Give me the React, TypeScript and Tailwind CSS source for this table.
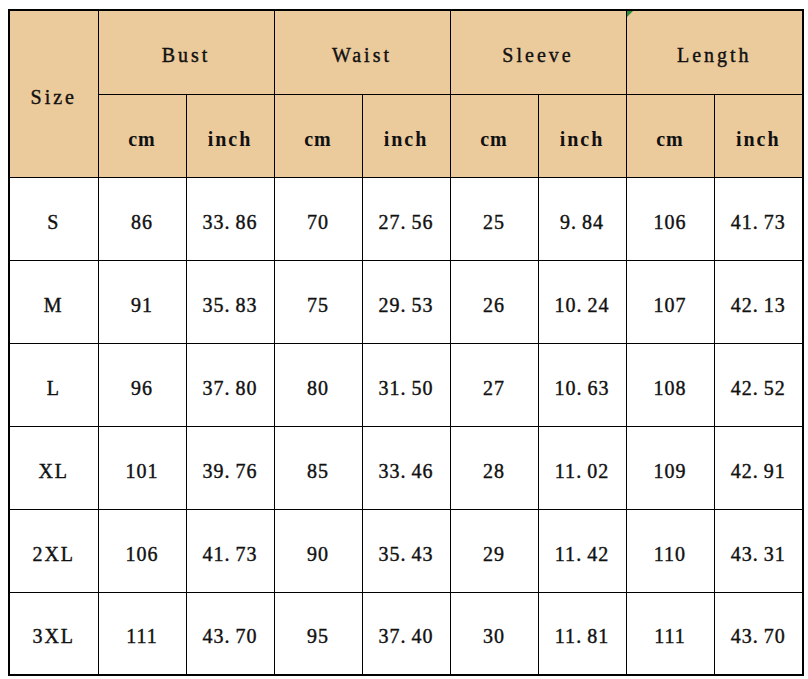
const groups = ["Bust", "Waist", "Sleeve", "Length"];

const rows: string[][] = [
  ["S", "86", "33.86", "70", "27.56", "25", "9.84", "106", "41.73"],
  ["M", "91", "35.83", "75", "29.53", "26", "10.24", "107", "42.13"],
  ["L", "96", "37.80", "80", "31.50", "27", "10.63", "108", "42.52"],
  ["XL", "101", "39.76", "85", "33.46", "28", "11.02", "109", "42.91"],
  ["2XL", "106", "41.73", "90", "35.43", "29", "11.42", "110", "43.31"],
  ["3XL", "111", "43.70", "95", "37.40", "30", "11.81", "111", "43.70"],
];

const cell = "border border-black text-center align-middle pt-[6px]";
const heavy = "font-normal [-webkit-text-stroke:0.4px_#111]";

// wide-dot look of the original sheet font: "33. 86"
const Num = ({ v }: { v: string }) => {
  const [a, b] = v.split(".");
  if (b === undefined) return <>{v}</>;
  return (
    <>
      {a}
      <span className="mr-[5px]">.</span>
      {b}
    </>
  );
};

export default function App() {
  return (
    <div className="min-h-screen bg-white pl-[8px] pt-[9px] text-[#111] font-['Liberation_Serif',serif] text-[20px]">
      <table className="table-fixed border-collapse border-2 border-black w-[794px]">
        <colgroup>
          <col className="w-[89px]" />
          {Array.from({ length: 7 }).map((_, i) => (
            <col key={i} className="w-[88px]" />
          ))}
          <col className="w-[89px]" />
        </colgroup>
        <thead>
          <tr className="h-[84px] bg-[#ebca9c]">
            <th rowSpan={2} className={`${cell} ${heavy} tracking-[3px]`}>
              Size
            </th>
            {groups.map((g) => (
              <th key={g} colSpan={2} className={`${cell} ${heavy} tracking-[3px] relative`}>
                {g}
                {g === "Length" && (
                  <span className="absolute left-0 top-0 w-0 h-0 border-t-[6px] border-r-[6px] border-t-[#2e8b3a] border-r-transparent" />
                )}
              </th>
            ))}
          </tr>
          <tr className="h-[83px] bg-[#ebca9c]">
            {groups.map((g) => (
              <>
                <th key={g + "cm"} className={`${cell} font-bold tracking-[1px]`}>
                  cm
                </th>
                <th key={g + "in"} className={`${cell} font-bold tracking-[2px]`}>
                  inch
                </th>
              </>
            ))}
          </tr>
        </thead>
        <tbody>
          {rows.map((r) => (
            <tr key={r[0]} className="h-[83px]">
              {r.map((v, i) => (
                <td key={i} className={`${cell} ${heavy} ${i === 0 ? "tracking-[2px]" : "tracking-[1px]"}`}>
                  <Num v={v} />
                </td>
              ))}
            </tr>
          ))}
        </tbody>
      </table>
    </div>
  );
}
